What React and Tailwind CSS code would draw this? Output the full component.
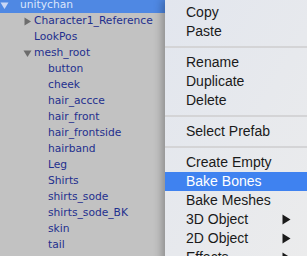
import React from "react";

const tree = [
  { name: "Character1_Reference", level: 1, arrow: "right" },
  { name: "LookPos", level: 1 },
  { name: "mesh_root", level: 1, arrow: "down" },
  { name: "button", level: 2 },
  { name: "cheek", level: 2 },
  { name: "hair_accce", level: 2 },
  { name: "hair_front", level: 2 },
  { name: "hair_frontside", level: 2 },
  { name: "hairband", level: 2 },
  { name: "Leg", level: 2 },
  { name: "Shirts", level: 2 },
  { name: "shirts_sode", level: 2 },
  { name: "shirts_sode_BK", level: 2 },
  { name: "skin", level: 2 },
  { name: "tail", level: 2 },
];

const Tri = ({ dir, color }) => (
  <svg width="9" height="9" viewBox="0 0 9 9" className="shrink-0">
    {dir === "down" ? (
      <polygon points="0.5,1.5 8.5,1.5 4.5,8" fill={color} />
    ) : (
      <polygon points="1.5,0.5 8,4.5 1.5,8.5" fill={color} />
    )}
  </svg>
);

const MenuItem = ({ label, active, sub }) => (
  <div
    className={
      "h-[19px] flex items-center pl-[21px] pr-[34px] justify-between " +
      (active ? "bg-[#3f82f0] text-white" : "text-[#1a1a1a]")
    }
  >
    <span>{label}</span>
    {sub && (
      <svg width="9" height="11" viewBox="0 0 9 11">
        <polygon points="0.5,0.5 8.5,5.5 0.5,10.5" fill="#1a1a1a" />
      </svg>
    )}
  </div>
);

const Sep = () => (
  <div className="h-[12px] flex items-center">
    <div className="h-[2px] w-full bg-[#d4d4d6]" />
  </div>
);

export default function App() {
  return (
    <div className="w-[307px] h-[256px] overflow-hidden relative bg-[#c2c2c2] font-['DejaVu_Sans',sans-serif] text-[10.7px]">
      <div className="flex flex-col mt-[-3px]">
        <div className="h-[16px] bg-[#4f88e3] flex items-center text-[#dce6fb]">
          <div className="w-[20px] flex">
            <Tri dir="down" color="#c9d7f5" />
          </div>
          <span>unitychan</span>
        </div>
        {tree.map((r) => (
          <div key={r.name} className="h-[16px] flex items-center text-[#1f2f8e]">
            {r.level === 1 ? (
              <div className="w-[34px] flex pl-[23px]">
                {r.arrow && <Tri dir={r.arrow} color="#6c6c6c" />}
              </div>
            ) : (
              <div className="w-[48px]" />
            )}
            <span>{r.name}</span>
          </div>
        ))}
      </div>

      <div className="absolute left-[165px] top-0 w-[160px] h-[270px] bg-gradient-to-br from-[#e2e6ee] to-[#ececec] shadow-[-3px_0_8px_rgba(0,0,0,0.28)] pt-[3px] font-['Liberation_Sans',Arial,sans-serif] text-[14px]">
        <MenuItem label="Copy" />
        <MenuItem label="Paste" />
        <Sep />
        <MenuItem label="Rename" />
        <MenuItem label="Duplicate" />
        <MenuItem label="Delete" />
        <Sep />
        <MenuItem label="Select Prefab" />
        <Sep />
        <MenuItem label="Create Empty" />
        <MenuItem label="Bake Bones" active />
        <MenuItem label="Bake Meshes" />
        <MenuItem label="3D Object" sub />
        <MenuItem label="2D Object" sub />
        <MenuItem label="Effects" sub />
      </div>
    </div>
  );
}
